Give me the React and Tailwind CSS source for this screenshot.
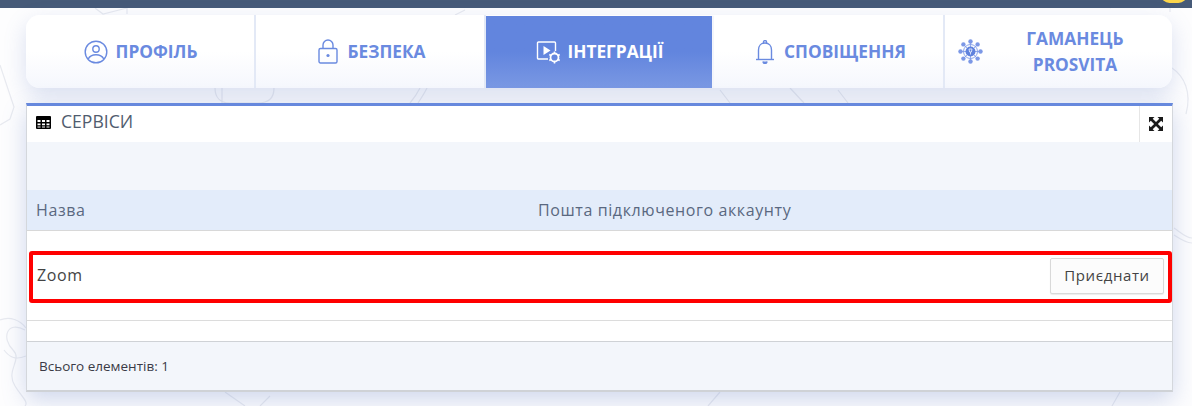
const font = { fontFamily: '"Open Sans", "Noto Sans", sans-serif' };

const tabs = [
  { key: "profile", label: "ПРОФІЛЬ", icon: "profile", width: "w-[230px]", gap: "gap-2 pl-[1px]" },
  { key: "security", label: "БЕЗПЕКА", icon: "lock", width: "w-[230px]", gap: "gap-[10px] pl-[3px]" },
  { key: "integrations", label: "ІНТЕГРАЦІЇ", icon: "video", width: "w-[228px]", gap: "gap-[5px] pl-[2px]", active: true },
  { key: "notifications", label: "СПОВІЩЕННЯ", icon: "bell", width: "w-[231px]", gap: "gap-[9px] pl-[4px]" },
];

const ProfileIcon = () => (
  <svg width="24" height="24" viewBox="0 0 24 24" fill="none" stroke="currentColor" strokeWidth="1.4">
    <circle cx="12" cy="12" r="10.8" />
    <circle cx="12" cy="9" r="3.2" />
    <path d="M4.2 19c1.5-3 4.5-4.2 7.8-4.2s6.3 1.2 7.8 4.2" />
  </svg>
);

const LockIcon = () => (
  <svg width="20" height="25" viewBox="0 0 20 25" fill="none" stroke="currentColor" strokeWidth="1.4">
    <rect x="1" y="9.5" width="18" height="14.5" rx="1.5" />
    <path d="M5 9.5V6a5 5 0 0 1 10 0v3.5" />
    <circle cx="10" cy="16.5" r="1.6" fill="currentColor" stroke="none" />
  </svg>
);

const BellIcon = () => (
  <svg width="20" height="24" viewBox="0 0 20 24" fill="none" stroke="currentColor" strokeWidth="1.4">
    <path d="M3.5 19.5V10c0-4 2.6-7 6.5-7s6.5 3 6.5 7v9.5" />
    <path d="M1 19.5h18" />
    <path d="M8.5 3V2a1.5 1.5 0 0 1 3 0v1" />
    <path d="M8 21.5a2 2 0 0 0 4 0" fill="currentColor" />
  </svg>
);

const VideoGearIcon = () => (
  <svg width="26" height="24" viewBox="0 0 26 24" fill="none" stroke="currentColor" strokeWidth="1.4">
    <path d="M12 19H2.5a1 1 0 0 1-1-1V3a1 1 0 0 1 1-1h16a1 1 0 0 1 1 1v8" />
    <path d="M7.5 6v9l7-4.5z" fill="currentColor" stroke="none" />
    <circle cx="18.5" cy="17.5" r="4" strokeWidth="1.8" />
    <path d="M18.5 11.5v2M18.5 21.5v2M13.3 14.5l1.7 1M22 19.5l1.7 1M13.3 20.5l1.7-1M22 15.5l1.7-1" strokeWidth="1.6" />
  </svg>
);

const NetworkIcon = () => {
  const dots = [
    [12.5, 2.5], [12.5, 22.5], [2.5, 12.5], [22.5, 12.5],
    [5.4, 5.4], [19.6, 5.4], [5.4, 19.6], [19.6, 19.6],
  ];
  return (
    <svg width="25" height="25" viewBox="0 0 25 25" fill="none" className="shrink-0 text-[#7c98e6]">
      {dots.map(([x, y]) => (
        <g key={`${x}-${y}`}>
          <path d={`M12.5 12.5L${x} ${y}`} stroke="currentColor" strokeWidth="0.8" />
          <circle cx={x} cy={y} r="2.2" fill="currentColor" />
        </g>
      ))}
      <circle cx="12.5" cy="12.5" r="7" stroke="currentColor" strokeWidth="0.9" />
      <circle cx="12.5" cy="12.5" r="5" fill="#5f82dd" />
      <path d="M11 10h3l-.6 3h-1.8zM12.5 13v2.5" stroke="#dfe7fb" strokeWidth="0.9" />
    </svg>
  );
};

const GridIcon = () => (
  <svg width="15" height="13" viewBox="0 0 15 13" className="translate-y-[2px] text-black">
    <path
      fill="currentColor"
      fillRule="evenodd"
      d="M1 0h13a1 1 0 0 1 1 1v11a1 1 0 0 1-1 1H1a1 1 0 0 1-1-1V1a1 1 0 0 1 1-1zM1.5 4v2h3V4zm4.5 0v2h3V4zm4.500 0v2h3V4zM1.500 7.500v1.800h3V7.500zm4.500 0v1.800h3V7.500zm4.500 0v1.800h3V7.500zM1.500 10.500v1h3v-1zm4.500 0v1h3v-1zm4.500 0v1h3v-1z"
    />
  </svg>
);

const ExpandIcon = () => (
  <svg width="14" height="14" viewBox="0 0 14 14" fill="#1a1a1a">
    <path d="M0 0h5.500L3.700 1.800 7 5.100 10.300 1.800 8.500 0H14v5.500l-1.800-1.800L8.900 7l3.300 3.300L14 8.500V14H8.500l1.800-1.800L7 8.900l-3.300 3.300L5.500 14H0V8.500l1.800 1.800L5.100 7 1.800 3.700 0 5.500z" />
  </svg>
);

const TabIcon = ({ name }) => {
  if (name === "profile") return <ProfileIcon />;
  if (name === "lock") return <LockIcon />;
  if (name === "bell") return <BellIcon />;
  return <VideoGearIcon />;
};

// faint doodles behind the page
const Doodles = () => (
  <svg className="absolute inset-0 h-full w-full" viewBox="0 0 1192 406" fill="none" stroke="#e8eaf0" strokeWidth="1.2">
    <path d="M95 8l8 6 24-6M127 0v14" />
    <path d="M0 65l14 42-4 12-10 6" />
    <path d="M215 88c0 10 6 15 15 15h28c10 0 16-5 16-15M222 88v15" />
    <path d="M410 103c5-6 8-11 10-15M418 103c4-6 7-11 9-15" />
    <path d="M1172 68c12 8 20 24 14 46" />
    <path d="M25 330c-18-10-24 8-12 20 10 10-8 20 2 36 6 10 14 16 10 20" />
    <path d="M0 320c10-4 20 0 26 8M4 350c6 8 12 10 22 6" />
    <path d="M720 90l10 13M790 88l14 15M838 90l10 13" />
    <path d="M1174 235c6 4 12 8 18 8M1174 228c6 4 12 10 18 10" />
    <path d="M225 392l20 14M270 396l-10 10M720 392l-12 14M1120 392l-8 14" />
    <path d="M380 8V0M465 10l-10 5M1170 12V0M1110 8l8-8" />
  </svg>
);

export default function App() {
  return (
    <div
      className="relative h-[406px] w-[1192px] overflow-hidden bg-[#fdfdfe] text-[#3c4a5e]"
      style={font}
    >
      <Doodles />
      <div className="relative h-2 bg-[#465a78]">
        <div className="absolute right-[5px] top-[-14px] h-[17px] w-[26px] rounded-full bg-[#fbd54a]" />
      </div>

      <div className="relative px-[26px] pt-[7px]">
        <nav className="flex h-[73px] w-[1146px] rounded-[14px] shadow-[0_8px_22px_rgba(90,120,190,0.22)]">
          {tabs.map((tab, index) => (
            <a
              key={tab.key}
              className={
                tab.active
                  ? `mt-px flex ${tab.width} ${tab.gap} items-center justify-center border-r-2 border-[#f3f5fb] bg-gradient-to-b from-[#6285de] from-50% to-[#7a98e3] text-[17.3px] font-bold text-white`
                  : `flex ${tab.width} ${tab.gap} items-center justify-center border-r-2 border-[#e3e9f6] bg-gradient-to-b from-white from-50% to-[#f5f7fd] text-[17.3px] font-bold text-[#6a8ae0] ${index === 0 ? "rounded-l-[14px]" : ""}`
              }
            >
              <TabIcon name={tab.icon} />
              <span>{tab.label}</span>
            </a>
          ))}
          <a className="flex flex-1 items-center rounded-r-[14px] bg-gradient-to-b from-white from-50% to-[#f5f7fd] pl-[13px] text-[17.3px] font-bold text-[#6a8ae0]">
            <NetworkIcon />
            <span className="w-[184px] text-center leading-[26px]">
              ГАМАНЕЦЬ
              <br />
              PROSVITA
            </span>
          </a>
        </nav>

        <section className="relative mt-[15px] w-[1147px] border-x border-b-2 border-x-[#d4d7dc] border-b-[#cfd2d6] border-t-[3px] border-t-[#6688dd] bg-white shadow-[0_8px_22px_rgba(90,120,190,0.28)]">
          <header className="flex h-[36px] items-center justify-between">
            <div className="flex -translate-y-[3px] items-center gap-[10px] pl-[9px] text-[17.6px] text-[#505c6e]">
              <GridIcon />
              <span>СЕРВІСИ</span>
            </div>
            <div className="flex h-full w-[33px] items-center justify-center border-l border-[#e6e6e6]">
              <ExpandIcon />
            </div>
          </header>

          <div className="h-[48px] bg-[#f3f6fb]" />

          <div className="flex h-[41px] items-center border-b border-[#d8d8d8] bg-[#e3ecfa] pl-[9px] text-[16px] tracking-[0.6px] text-[#5a6880]">
            <span className="w-[502px]">Назва</span>
            <span>Пошта підключеного аккаунту</span>
          </div>

          <div className="flex h-[90px] items-center justify-between border-b border-[#dcdcdc] pl-[10px] pr-[8px]">
            <span className="-translate-y-px text-[16px] tracking-[0.6px] text-[#444]">Zoom</span>
            <button className="h-[36px] w-[114px] rounded-[2px] border border-[#d9d9d9] bg-[#fcfcfc] text-[15px] tracking-[0.6px] text-[#444] shadow-[0_1px_1px_rgba(0,0,0,0.08)]">
              Приєднати
            </button>
          </div>

          <div className="h-[21px] border-b border-[#cfd2d6]" />

          <footer className="flex h-[48px] items-center bg-[#f3f6fb] pl-3 text-[13.5px] text-[#3a3a46]">
            Всього елементів: 1
          </footer>

          <div className="absolute left-[2px] top-[145px] h-[52px] w-[1143px] rounded-[3px] border-4 border-[#ff0000]" />
        </section>
      </div>
    </div>
  );
}
